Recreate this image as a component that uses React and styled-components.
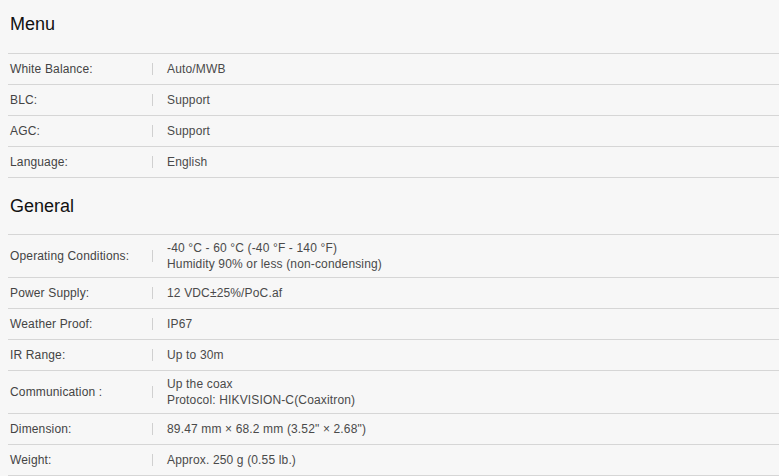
import React from "react";
import styled, { createGlobalStyle } from "styled-components";

const GlobalStyle = createGlobalStyle`
  body {
    margin: 0;
    background: #f7f7f7;
    font-family: "Liberation Sans", Arial, sans-serif;
  }
`;

const Wrapper = styled.div`
  padding-left: 8px;
`;

const Section = styled.section``;

const Heading = styled.h2`
  margin: 0;
  padding: 0 2px;
  height: ${props => (props.first ? "53px" : "56px")};
  line-height: ${props => (props.first ? "49px" : "56px")};
  font-size: 18px;
  font-weight: 400;
  color: #111;
  border-bottom: 1px solid #d6d6d6;
`;

const Row = styled.div`
  display: flex;
  align-items: center;
  min-height: 31px;
  padding: 5px 2px;
  box-sizing: border-box;
  border-bottom: 1px solid #d6d6d6;
  font-size: 12px;
  line-height: 16px;
  letter-spacing: 0.15px;
  color: #444;
`;

const Label = styled.div`
  width: 142px;
  flex-shrink: 0;
`;

const Divider = styled.span`
  width: 1px;
  height: 12px;
  background: #d0d0d0;
  margin-right: 14px;
  flex-shrink: 0;
`;

const Value = styled.div`
  color: #4a4a4a;
`;

const sections = [
  {
    title: "Menu",
    rows: [
      ["White Balance:", ["Auto/MWB"]],
      ["BLC:", ["Support"]],
      ["AGC:", ["Support"]],
      ["Language:", ["English"]],
    ],
  },
  {
    title: "General",
    rows: [
      [
        "Operating Conditions:",
        ["-40 °C - 60 °C (-40 °F - 140 °F)", "Humidity 90% or less (non-condensing)"],
      ],
      ["Power Supply:", ["12 VDC±25%/PoC.af"]],
      ["Weather Proof:", ["IP67"]],
      ["IR Range:", ["Up to 30m"]],
      ["Communication :", ["Up the coax", "Protocol: HIKVISION-C(Coaxitron)"]],
      ["Dimension:", ["89.47 mm × 68.2 mm (3.52\" × 2.68\")"]],
      ["Weight:", ["Approx. 250 g (0.55 lb.)"]],
    ],
  },
];

const App = () => {
  return (
    <Wrapper>
      <GlobalStyle />
      {sections.map((section, i) => (
        <Section key={section.title}>
          <Heading first={i === 0}>{section.title}</Heading>
          {section.rows.map(([label, lines]) => (
            <Row key={label}>
              <Label>{label}</Label>
              <Divider />
              <Value>
                {lines.map(line => (
                  <div key={line}>{line}</div>
                ))}
              </Value>
            </Row>
          ))}
        </Section>
      ))}
    </Wrapper>
  );
};

export default App;
